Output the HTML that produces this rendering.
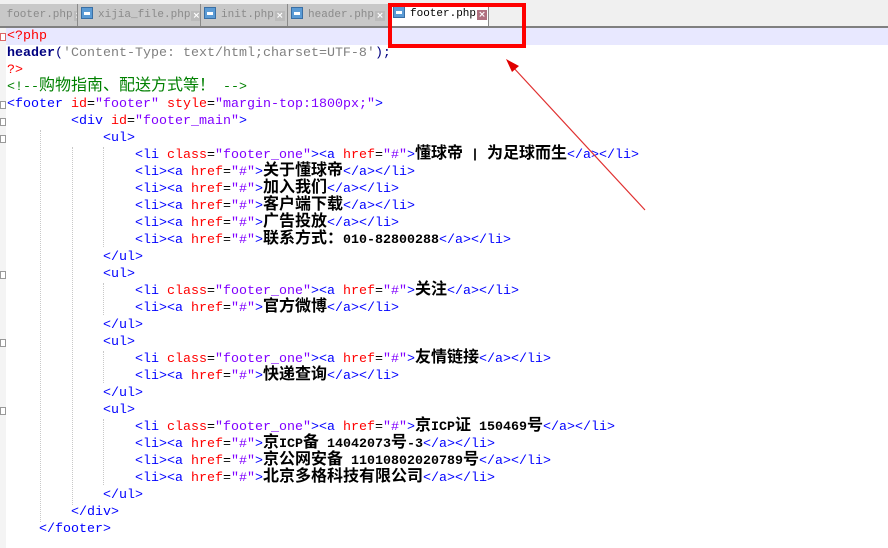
<!DOCTYPE html>
<html><head><meta charset="utf-8"><style>
body{margin:0;width:888px;height:548px;overflow:hidden;background:#fff;position:relative;font-family:"Liberation Mono",monospace;font-size:13.33px}
.tabbar{position:absolute;left:0;top:0;width:888px;height:26px;background:#f0f0f0;border-bottom:2px solid #808080}
.tab{position:absolute;top:4px;height:22px;background:#c8c8c8;border-right:1px solid #8a8a8a;color:#8a8a8a;font-size:11px;line-height:22px;white-space:pre;overflow:hidden}
.tab.act{background:#fff;color:#000;top:3px;height:23px}
.ic{display:inline-block;width:12px;height:12px;background:#5b9bd5;border:1px solid #3a6fa5;vertical-align:-2px;margin:0 5px 0 3px;box-sizing:border-box;position:relative}
.ic:after{content:"";position:absolute;left:2px;top:4px;width:6px;height:3px;background:#fff}
.x{display:inline-block;width:10px;height:10px;background:#bbb;color:#fff;font-size:9px;line-height:10px;text-align:center;vertical-align:-1px;margin-left:1px;font-family:"DejaVu Sans",sans-serif;font-weight:bold}
.act .x{background:#b07080}
.hl{position:absolute;left:0;top:28px;width:888px;height:17px;background:#e8e8ff}
.gut{position:absolute;left:0;top:28px;width:6px;height:520px;background:#f4f4f4}
.g{position:absolute;width:1px;border-left:1px dotted #c8c8c8}
.l{position:absolute;left:7px;height:17px;line-height:17px;white-space:pre}
.t{color:#0000ff}.a{color:#ff0000}.s{color:#8000ff}.k{color:#000}
.c{font-family:"Noto Sans CJK SC",sans-serif;font-size:16px;font-weight:bold;color:#000;line-height:0}
.b{color:#000;font-weight:bold}
.cm{color:#008000}
.cm .cc{font-family:"Noto Sans CJK SC",sans-serif;font-size:16px;color:#008000;line-height:0}
.fm{position:absolute;left:0;width:6px;height:8px;border:1px solid #999;box-sizing:border-box;background:#fff}
</style></head><body>
<div class="tabbar"></div>
<div class="tab" style="left:0;width:77px"> footer.php<span class="x">×</span></div>
<div class="tab" style="left:78px;width:122px"><span class="ic"></span>xijia_file.php<span class="x">×</span></div>
<div class="tab" style="left:201px;width:86px"><span class="ic"></span>init.php<span class="x">×</span></div>
<div class="tab" style="left:288px;width:101px"><span class="ic"></span>header.php<span class="x">×</span></div>
<div class="tab act" style="left:390px;width:98px"><span class="ic"></span>footer.php<span class="x">×</span></div>
<div class="hl"></div>
<div class="gut"></div>
<div class="fm" style="top:33px;border-color:#d66"></div>
<div class="fm" style="top:101px"></div>
<div class="fm" style="top:118px"></div>
<div class="fm" style="top:135px"></div>
<div class="fm" style="top:271px"></div>
<div class="fm" style="top:339px"></div>
<div class="fm" style="top:407px"></div>
<div class="g" style="left:40px;top:130px;height:392px"></div>
<div class="g" style="left:72px;top:147px;height:358px"></div>
<div class="g" style="left:103px;top:147px;height:100px"></div>
<div class="g" style="left:103px;top:283px;height:32px"></div>
<div class="g" style="left:103px;top:351px;height:32px"></div>
<div class="g" style="left:103px;top:419px;height:66px"></div>

<div class="l" style="top:28px"><span class="a">&lt;?php</span></div>
<div class="l" style="top:45px"><span style="color:#000080;font-weight:bold">header</span><span style="color:#000080">(</span><span style="color:#808080">'Content-Type: text/html;charset=UTF-8'</span><span style="color:#000080">);</span></div>
<div class="l" style="top:62px"><span class="a">?&gt;</span></div>
<div class="l" style="top:79px"><span class="cm">&lt;!--<span class="cc">购物指南、配送方式等！</span> --&gt;</span></div>
<div class="l" style="top:96px"><span class="t">&lt;footer </span><span class="a">id</span>=<span class="s">"footer"</span> <span class="a">style</span>=<span class="s">"margin-top:1800px;"</span><span class="t">&gt;</span></div>
<div class="l" style="top:113px">        <span class="t">&lt;div </span><span class="a">id</span>=<span class="s">"footer_main"</span><span class="t">&gt;</span></div>
<div class="l" style="top:130px">            <span class="t">&lt;ul&gt;</span></div>
<div class="l" style="top:147px">                <span class="t">&lt;li </span><span class="a">class</span>=<span class="s">"footer_one"</span><span class="t">&gt;&lt;a </span><span class="a">href</span>=<span class="s">"#"</span><span class="t">&gt;</span><span class="c">懂球帝</span><span class="b"> | </span><span class="c">为足球而生</span><span class="t">&lt;/a&gt;&lt;/li&gt;</span></div>
<div class="l" style="top:164px">                <span class="t">&lt;li&gt;&lt;a </span><span class="a">href</span>=<span class="s">"#"</span><span class="t">&gt;</span><span class="c">关于懂球帝</span><span class="t">&lt;/a&gt;&lt;/li&gt;</span></div>
<div class="l" style="top:181px">                <span class="t">&lt;li&gt;&lt;a </span><span class="a">href</span>=<span class="s">"#"</span><span class="t">&gt;</span><span class="c">加入我们</span><span class="t">&lt;/a&gt;&lt;/li&gt;</span></div>
<div class="l" style="top:198px">                <span class="t">&lt;li&gt;&lt;a </span><span class="a">href</span>=<span class="s">"#"</span><span class="t">&gt;</span><span class="c">客户端下载</span><span class="t">&lt;/a&gt;&lt;/li&gt;</span></div>
<div class="l" style="top:215px">                <span class="t">&lt;li&gt;&lt;a </span><span class="a">href</span>=<span class="s">"#"</span><span class="t">&gt;</span><span class="c">广告投放</span><span class="t">&lt;/a&gt;&lt;/li&gt;</span></div>
<div class="l" style="top:232px">                <span class="t">&lt;li&gt;&lt;a </span><span class="a">href</span>=<span class="s">"#"</span><span class="t">&gt;</span><span class="c">联系方式：</span><span class="b">010-82800288</span><span class="t">&lt;/a&gt;&lt;/li&gt;</span></div>
<div class="l" style="top:249px">            <span class="t">&lt;/ul&gt;</span></div>
<div class="l" style="top:266px">            <span class="t">&lt;ul&gt;</span></div>
<div class="l" style="top:283px">                <span class="t">&lt;li </span><span class="a">class</span>=<span class="s">"footer_one"</span><span class="t">&gt;&lt;a </span><span class="a">href</span>=<span class="s">"#"</span><span class="t">&gt;</span><span class="c">关注</span><span class="t">&lt;/a&gt;&lt;/li&gt;</span></div>
<div class="l" style="top:300px">                <span class="t">&lt;li&gt;&lt;a </span><span class="a">href</span>=<span class="s">"#"</span><span class="t">&gt;</span><span class="c">官方微博</span><span class="t">&lt;/a&gt;&lt;/li&gt;</span></div>
<div class="l" style="top:317px">            <span class="t">&lt;/ul&gt;</span></div>
<div class="l" style="top:334px">            <span class="t">&lt;ul&gt;</span></div>
<div class="l" style="top:351px">                <span class="t">&lt;li </span><span class="a">class</span>=<span class="s">"footer_one"</span><span class="t">&gt;&lt;a </span><span class="a">href</span>=<span class="s">"#"</span><span class="t">&gt;</span><span class="c">友情链接</span><span class="t">&lt;/a&gt;&lt;/li&gt;</span></div>
<div class="l" style="top:368px">                <span class="t">&lt;li&gt;&lt;a </span><span class="a">href</span>=<span class="s">"#"</span><span class="t">&gt;</span><span class="c">快递查询</span><span class="t">&lt;/a&gt;&lt;/li&gt;</span></div>
<div class="l" style="top:385px">            <span class="t">&lt;/ul&gt;</span></div>
<div class="l" style="top:402px">            <span class="t">&lt;ul&gt;</span></div>
<div class="l" style="top:419px">                <span class="t">&lt;li </span><span class="a">class</span>=<span class="s">"footer_one"</span><span class="t">&gt;&lt;a </span><span class="a">href</span>=<span class="s">"#"</span><span class="t">&gt;</span><span class="c">京</span><span class="b">ICP</span><span class="c">证</span><span class="b"> 150469</span><span class="c">号</span><span class="t">&lt;/a&gt;&lt;/li&gt;</span></div>
<div class="l" style="top:436px">                <span class="t">&lt;li&gt;&lt;a </span><span class="a">href</span>=<span class="s">"#"</span><span class="t">&gt;</span><span class="c">京</span><span class="b">ICP</span><span class="c">备</span><span class="b"> 14042073</span><span class="c">号</span><span class="b">-3</span><span class="t">&lt;/a&gt;&lt;/li&gt;</span></div>
<div class="l" style="top:453px">                <span class="t">&lt;li&gt;&lt;a </span><span class="a">href</span>=<span class="s">"#"</span><span class="t">&gt;</span><span class="c">京公网安备</span><span class="b"> 11010802020789</span><span class="c">号</span><span class="t">&lt;/a&gt;&lt;/li&gt;</span></div>
<div class="l" style="top:470px">                <span class="t">&lt;li&gt;&lt;a </span><span class="a">href</span>=<span class="s">"#"</span><span class="t">&gt;</span><span class="c">北京多格科技有限公司</span><span class="t">&lt;/a&gt;&lt;/li&gt;</span></div>
<div class="l" style="top:487px">            <span class="t">&lt;/ul&gt;</span></div>
<div class="l" style="top:504px">        <span class="t">&lt;/div&gt;</span></div>
<div class="l" style="top:521px">    <span class="t">&lt;/footer&gt;</span></div>

<div style="position:absolute;left:388px;top:3px;width:138px;height:45px;border:4px solid #f00;box-sizing:border-box"></div>
<svg style="position:absolute;left:0;top:0" width="888" height="548">
<line x1="645" y1="210" x2="512" y2="66" stroke="#e03030" stroke-width="1.2"/>
<polygon points="506,59 519,66 512,72" fill="#e00000"/>
</svg>
</body></html>
